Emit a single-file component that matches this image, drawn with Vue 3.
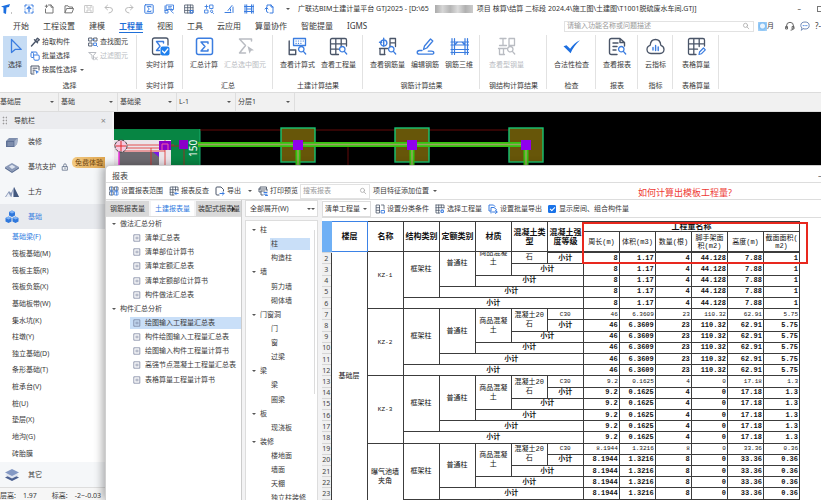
<script setup>
import { ref } from 'vue'

const B = '#3b7de0'
const D = '#4a5568'
const G = '#b9bcc2'
const s = (c, d, w = 1) => `<path d="${d}" fill="none" stroke="${c}" stroke-width="${w}" stroke-linejoin="round" stroke-linecap="round"/>`
const lens = (c) => s(c, 'M16 12.2a2.7 2.7 0 1 1-5.4 0a2.7 2.7 0 1 1 5.4 0M15.4 14.4l2.3 2.6', 1.3)

const large = {
  select: s(B, 'M5.5 2.5v13l3.6-3.1h6.1z', 1.3),
  realtime: s(D, 'M9 17.5H3.5q-2 0-2-2V3q0-2 2-2H15q2 0 2 2v5', 1.3) + s(B, 'M12.5 6V4.5h-7L9 9.2l-3.5 4.3h3', 1.4) + `<rect x="9.5" y="9.5" width="9" height="9" rx="2" fill="#1f80ee"/>` + s('#fff', 'M11.5 14l2 2 3.3-4', 1.2),
  sum: s(B, 'M3.5 1.2h12q2 0 2 2v12.3q0 2-2 2h-12q-2 0-2-2V3.2q0-2 2-2z', 1.5) + s(B, 'M13 6.5V5H6l4 4.5L6 14h7v-1.5', 1.4),
  sumSel: s(G, 'M15.5 4V2H3.5l6 6.5-6 7.5h6', 1.5) + `<path d="M11.5 9l6.5 4.2-3 .6-1.5 3z" fill="${G}"/>`,
  formula: s(B, 'M5.5 1.5h12v7h-12z', 1.3) + s(B, 'M8 4h.2M10.4 4h.2M12.8 4h.2M15.2 4h.2M8 6.3h.2M10.4 6.3h.2M12.8 6.3h.2', 1.2) + s(D, 'M1.2 4v13.5h6.5v-4.5h-6.5', 1.4) + lens(B),
  quantity: s(D, 'M9.5 17.5H3q-1.5 0-1.5-1.5V3Q1.5 1.5 3 1.5h13q1.5 0 1.5 1.5v6M1.5 6.8h16M1.5 12.2h8M6.8 1.5v16M12.2 1.5v8', 1.3) + lens(B),
  rebarQty: s(B, 'M1.5 5.2h2.2M5.7 1.2v8M8.8 5.2a3.1 3.1 0 1 1-6 0a3.1 3.1 0 0 1 6 0', 1.4) + s(D, 'M12 9.5V1.5h5.5v8M12 5.8h5.5M1.5 11.5h8M2 11.5v6h5M6.5 11.5v6', 1.3) + lens(B),
  rebarEdit: s(B, 'M7.5 12.5l1-3.5 6-7 2.3 2-6 7zM6 13.5H3.5q-2.3.2-2.3 2 0 1.7 2.3 1.7h12q2.3 0 2.3-1.5t-2.5-1.5h-3', 1.3),
  rebar3d: s(B, 'M2 1.5v16M4.5 1.5v16M15 1.5v16M17.5 1.5v16M1 5h17.5M1 8h17.5M1 12.5h17.5M1 15.5h17.5M4.5 8l3-3M15 8l-3-3', 1.2),
  steel: s(G, 'M3 1.5h6M6 1.5v7M2.5 8.5h7M12 8.5v-7h5.5v7M12 8.5h5.5M1.5 11.5h8M2.5 11.5v6h5M6.5 11.5v6', 1.3) + lens(G),
  check: `<path d="M1.5 9.2l3-1 3.6 3.6Q12 6 18 3.2 11.5 9 8.6 16.2z" fill="#1d6fe0"/>`,
  report: s(D, 'M9 17.5H3.5q-2 0-2-2V3.5q0-2 2-2H12l4.5 4v3.5M5 6h5M5 9.5h4M5 13h3M12 1.5v4h4.5', 1.4) + lens(B),
  cloud: s(D, 'M5 16.5Q1.2 16.3 1 12.5 1 9.2 4.2 8.3 4.7 2.5 9.5 2.5t5.3 5.8Q18 9.2 18 12.5q-.2 3.8-4 4z', 1.3) + s(B, 'M7 13v-2.5M9.6 13.5v-5M12.2 13.5V10', 1.4),
  tableCalc: s(D, 'M9 17.5H3q-1.5 0-1.5-1.5V3Q1.5 1.5 3 1.5h13q1.5 0 1.5 1.5v6M1.5 6.8h16M1.5 12.2h9M6.8 1.5v16M12.2 1.5v8', 1.3) + s(B, 'M12 17.5l.5-2.5 4-4 1.8 1.8-4 4z', 1.2),
}

const small = {
  pick: s(D, 'M1.5 9l4.5-5M4.5 2.8l3 3M5.5 3.8l2-2.5 1.8 1.5-2.3 2z', 1.4),
  batch: s(B, 'M3.5 3.5v-.8q0-1.2-1-1.2H2Q1 1.5 1 2.5v3q0 1 1 1h1M4 4h4q1.2 0 1.2 1v3q0 1.2-1.2 1.2H5Q3.8 9.2 3.8 8z') + s(B, 'M1.5 1h4.5q1 0 1 1v1'),
  attr: s(D, 'M9 5V1H1v8h3M3 3.2h4M3 5.2h2M3 7h1') + `<path d="M5.2 5l4 2-1.7.5-.8 1.8z" fill="${B}"/>`,
  find: s(D, 'M1 1h3v3H1zM6 1h3v3H6zM1 6h3v3H1z', 0.9) + s(B, 'M6 6h2.5v2.5H6zM8.5 8.5l1 1M5 2.5h1', 0.9),
  filter: s(G, 'M1 1.5h7L5.5 4.5V8.5L4 7.5v-3zM6.5 6l3 3M9.5 6l-3 3'),
  newPick: s(B, 'M1 3V1h2M7 1h2v2M9 7v2H7M3 9H1V7M5 1v.2M1 5v.2M9 5v.2M5 9v.2', 1) + s(B, 'M5 7.8V3M3.2 4.6L5 2.8l1.8 1.8', 1.3),
  file: s('#777', 'M4.5 1H7l2 2.2V9H1.5V5M7 1v2.2h2M2.5 1v2.5M1.2 2.2h2.5'),
  open: s('#777', 'M1 8.5V1.8h3l1 1.2h3.5v1.2M1 8.5l1.6-4h7l-1.5 4z'),
  save: s('#c8c8c8', 'M1 1.5h7L9 2.5v6H1zM3 1.5v2.5h4V1.5M3 8.5V6h4v2.5'),
  undo: s('#bbb', 'M3.5 1.2L1 3.5l2.5 2.3M1 3.5h4.5q3 0 3 2.5T5 9'),
  redo: s('#bbb', 'M6.5 1.2L9 3.5 6.5 5.8M9 3.5H4.5q-3 0-3 2.5T5 9'),
  sumS: s(B, 'M1.5.8h7q.7 0 .7.7v7q0 .7-.7.7h-7q-.7 0-.7-.7v-7q0-.7.7-.7z') + s(B, 'M7 3.2v-.7H3.2L5.2 5l-2 2.5H7v-.7', 0.9),
  calcS: s(B, 'M2.5 1h7v4.5h-7zM1 2v7h3V6.5H1M4.5 2.7h3M4.5 4h2M7.5 7.2a1 1 0 1 1 .1 0M8.2 8l1.2 1.2', 0.9),
  gridS: s(D, 'M1 1h8v8H1zM1 3.7h8M1 6.4h8M3.7 1v8M6.4 1v8', 0.8) + s(B, 'M6.5 6.5h2.5V9H6.5z', 1),
  rebarS: s(B, 'M1 2.5h3M2.5 1v3.5M6 1h3v3.5H6zM1 6h3v3H1zM7.5 8.5a1.2 1.2 0 1 1 .1 0M8.5 8.5l1 1', 0.9),
  editS: s(B, 'M1 8.5h6M4 6.5l4-5M9 3v5.5M6.5 5v2', 1),
  frameS: s(B, 'M1 .8v8.4M2.7.8v8.4M7.5.8v8.4M9.2.8v8.4M.5 2.5h9M.5 7.5h9M2.7 5h5', 1),
  docS: s(B, 'M3 3V1h4l2 2v6H6M7 1v2h2M1 5l1.5-1.5L4 5M2.5 3.8V7q0 1.5 1.5 1.5', 1),
  range: s(D, 'M1 1h3.2v3.2H1zM5.8 1H9v3.2H5.8zM1 5.8h3.2V9H1z', 0.8) + s(B, 'M1 5h8M5.8 5.8H9V9H5.8zM2.5 1v8M7.5 1v8', 0.7),
  back: s(D, 'M5 9H1.2V1H9v4M1.2 3.7H9M1.2 6.3h4M3.8 1v8M6.5 1v4', 0.8) + s(B, 'M9.2 7.5H6M7.2 6.2L6 7.5l1.2 1.3', 0.9),
  exp: s(D, 'M4 9H2Q1 9 1 8V2q0-1 1-1h4l2.5 2.5V5') + s(B, 'M5 7.5h4M7.5 6L9 7.5 7.5 9'),
  print: s(D, 'M2 3V1h6.5v2M1 3h8v2M1 3v3h1.5M3 5v4h2M3 5h4', 0.9) + s(B, 'M6 6.5h3M6 8.2h3M7.5 9.5h2'),
  cond: s(D, 'M1.5 1h3v8h-3zM1.5 3.7h3M1.5 6.3h3M6.5 1h2.5v4', 0.8) + s(B, 'M6.5 6.5h3v2.5h-3z', 0.9),
  gear: s(D, 'M1 1h8v3M1 1v8h3.5M1 3.7h8M1 6.3h3.5M3.7 1v8M6.3 1v3', 0.8) + s(B, 'M8.5 7.2a1.3 1.3 0 1 1-2.6 0a1.3 1.3 0 1 1 2.6 0', 1.1),
  batchOut: s(B, 'M2.5 7H1V1h4.5L7 2.5M3 9V3.5h3l2.5 2V6M4.5 8h4.5M7.5 6.5L9.2 8 7.5 9.5', 1),
  doc: s('#6d7794', 'M1.5 1h7v8h-7zM3.5 4h3M3.5 6h3', 0.9),
  lens: s('#999', 'M7 4.2a2.6 2.6 0 1 1-5.2 0a2.6 2.6 0 1 1 5.2 0M6.3 6.2L8.5 8.5', 0.8),
  lock: s('#63718a', 'M2 4.5h6V9H2zM3.3 4.5V3q0-2 1.7-2t1.7 2v1.5M5 6v1.2', 1),
  headset: s('#666', 'M1.5 6.5V5q0-3.7 3.5-3.7T8.5 5v1.5M1 5.5h1.5v2.5H1zM7.5 5.5H9v2.5H7.5zM8 8q0 1.2-2 1.2'),
  chat: s('#7189b5', 'M1.5 9l.5-2Q.8 6 .8 4.5.8 1 5 1t4.2 3.5T5 8q-1 0-1.7-.3z') + s(B, 'M3.2 4.6h.1M5 4.6h.1M6.8 4.6h.1', 1.2),
}

const navIcons = {
  finish: `<path d="M1 6l3-3h9l-1 6-3 3H1z" fill="#7f8fae"/><path d="M1 6h8.5v6H1z" fill="#5f7196"/><path d="M9.5 6l3.5-3-1 6-2.5 3z" fill="#a9b5cc"/><path d="M2.5 8h6M2.5 10h6" stroke="#c8d1e2" stroke-width=".6"/>`,
  pit: `<path d="M0 7l7-4 7 4-7 4.5z" fill="#8b9ab8"/><path d="M0 7v1.5l7 4.5 7-4.5V7l-7 4.5z" fill="#5e7095"/><path d="M4 6.5l3-1.7L10.5 7 7 9z" fill="#dbe2ee"/>`,
  earth: `<path d="M0 12l4-6 2 2 3-6 5 10z" fill="#8a99b8"/><path d="M9 2l5 10H9z" fill="#44597f"/><path d="M3.5 8L6 12H1z" fill="#e8edf5"/><path d="M8 5v7H6.5z" fill="#f4f6fa"/>`,
  base: `<path d="M7 .5l3 1.5v3.5L7 7 4 5.5V2zM3.5 6.5l3 1.5v3.5l-3 1.5-3-1.5V8zM10.5 6.5l3 1.5v3.5l-3 1.5-3-1.5V8z" fill="#2f78dc"/><path d="M7 .5l3 1.5-3 1.5L4 2zM3.5 6.5l3 1.5-3 1.5-3-1.5zM10.5 6.5l3 1.5-3 1.5-3-1.5z" fill="#7fb2f5"/>`,
  other: `<path d="M0 9.5L7 6l7 3.5L7 13z" fill="#4b6090"/><path d="M0 7l7-3.5L14 7l-7 3.5z" fill="#dfe5f0"/><path d="M0 4.5L7 1l7 3.5L7 8z" fill="#8499c4"/>`,
}

const quick = ['newPick', 'file', 'open', 'save', 'undo', 'redo', 'sumS', 'calcS', 'gridS', 'rebarS', 'editS', 'frameS', 'docS']
const menus = ['开始', '工程设置', '建模', '工程量', '视图', '工具', '云应用', '算量协作', '智能提量', 'IGMS']
const groups = [
  { label: '实时计算', roomy: true, items: [['realtime', '实时计算']] },
  { label: '汇总', items: [['sum', '汇总计算'], ['sumSel', '汇总选中图元', true]] },
  { label: '土建计算结果', items: [['formula', '查看计算式'], ['quantity', '查看工程量']] },
  { label: '钢筋计算结果', items: [['rebarQty', '查看钢筋量'], ['rebarEdit', '编辑钢筋'], ['rebar3d', '钢筋三维']] },
  { label: '钢结构计算结果', roomy: true, items: [['steel', '查看型钢量', true]] },
  { label: '检查', items: [['check', '合法性检查']] },
  { label: '报表', items: [['report', '查看报表']] },
  { label: '指标', items: [['cloud', '云指标']] },
  { label: '表格算量', roomy: true, items: [['tableCalc', '表格算量']] },
]
const scopes = [['楼层', '基础层'], ['类型', '基础'], ['构件类型', '基础梁'], ['构件', 'L-1'], ['分层', '分层1']]
const nav = [['finish', '装修'], ['pit', '基坑支护'], ['earth', '土方'], ['base', '基础']]
const subNav = ['基础梁(F)', '筏板基础(M)', '筏板主筋(R)', '筏板负筋(X)', '基础板带(W)', '集水坑(K)', '柱墩(Y)', '独立基础(D)', '条形基础(T)', '桩承台(V)', '桩(U)', '垫层(X)', '地沟(G)', '砖胎膜']
const footings = [166, 280, 394]

const reports = [
  { t: '做法汇总分析', root: true },
  { t: '清单汇总表' }, { t: '清单部位计算书' }, { t: '清单定额汇总表' }, { t: '清单定额部位计算书' }, { t: '构件做法汇总表' },
  { t: '构件汇总分析', root: true },
  { t: '绘图输入工程量汇总表', on: true }, { t: '构件绘图输入工程量汇总表' }, { t: '绘图输入构件工程量计算书' }, { t: '高强节点混凝土工程量汇总表' }, { t: '表格算量工程量计算书' },
]
const parts = [
  { t: '柱', root: true }, { t: '柱', on: true }, { t: '构造柱' },
  { t: '墙', root: true }, { t: '剪力墙' }, { t: '砌体墙' },
  { t: '门窗洞', root: true }, { t: '门' }, { t: '窗' }, { t: '过梁' },
  { t: '梁', root: true }, { t: '梁' }, { t: '圈梁' },
  { t: '板', root: true }, { t: '现浇板' },
  { t: '装修', root: true }, { t: '楼地面' }, { t: '墙面' }, { t: '天棚' }, { t: '独立柱装修' },
]

const showRooms = ref(true)
const heads = ['楼层', '名称', '结构类别', '定额类别', '材质', '混凝土类\n型', '混凝土强\n度等级']
const measures = ['周长(m)', '体积(m3)', '数量(根)', '脚手架面\n积(m2)', '高度(m)', '截面面积(\nm2)']
const blocks = [
  { name: 'KZ-1', v: ['8', '1.17', '4', '44.128', '7.88', '1'] },
  { name: 'KZ-2', v: ['46', '6.3609', '23', '110.32', '62.91', '5.75'] },
  { name: 'KZ-3', v: ['9.2', '0.1625', '4', '0', '17.18', '1.3'] },
  { name: '曝气池墙\n夹角', v: ['8.1944', '1.3216', '8', '0', '33.36', '0.36'] },
]
// Six rows per component: the detail row followed by nested subtotals.
// The first detail row is scrolled under the header, so its single-line cells stay blank.
const blank = '\u00a0'
const rows = blocks.flatMap((b, i) =>
  Array.from({ length: 6 }, (_, k) => {
    const under = i === 0 && k === 0
    const cells = []
    if (k === 0) {
      if (i === 0) cells.push({ t: '基础层', rs: 24 })
      cells.push(
        { t: b.name, rs: 6, latin: b.name.startsWith('KZ') },
        { t: '框架柱', rs: 5 },
        { t: '普通柱', rs: 4 },
        { t: '商品混凝\n土', rs: 3 },
        { t: under ? blank + '\n石' : '混凝土20\n石', rs: 2 },
        { t: under ? blank : 'C30', latin: true },
      )
    } else {
      cells.push({ t: '小计', cs: k })
    }
    return { n: under ? blank : i * 6 + k + 1, cells, v: under ? b.v.map(() => blank) : b.v, bold: k > 0 }
  }),
)
</script>

<template>
  <div class="app">
    <header class="titlebar">
      <svg class="logo" viewBox="0 0 14 12"><path d="M1 3.5L10 1 9 4 6.500 4.500 6 11 3.500 10V4.600z" fill="#1c6fe0" /><path d="M11 9.500h1v1h-1z" fill="#888" /></svg>
      <div class="quick">
        <button v-for="q in quick" :key="q" :aria-label="q"><svg class="i10" viewBox="0 0 10 10" v-html="small[q]" /></button>
        <i class="caret" />
      </div>
      <h1>
        <span>广联达BIM土建计量平台 GTJ2025 - [D:\65</span><span class="mask" /><span>项目 核算\结算 二标段 2024.4\施工图\土建图\T1001脱硫废水车间.GTJ]</span>
      </h1>
      <div class="winbtns"><button aria-label="最小化">–</button><button aria-label="还原" class="box" /></div>
    </header>

    <nav class="menu">
      <a v-for="m in menus" :key="m" href="#" :class="{ on: m === '工程量' }">{{ m }}</a>
      <label class="search top">
        <input type="text" aria-label="搜索" placeholder="请输入功能名称或问题描述" />
        <svg class="i8" viewBox="0 0 10 10" v-html="small.lens" />
      </label>
      <div class="account">
        <span class="user"><i class="avatar" />月</span>
        <svg class="i10" viewBox="0 0 10 10" v-html="small.headset" />
        <svg class="i10" viewBox="0 0 10 10" v-html="small.chat" />
        <span class="help">?-</span>
      </div>
    </nav>

    <section class="ribbon">
      <div class="group first">
        <div class="tools">
          <button class="big active"><svg class="i19" viewBox="0 0 19 19" v-html="large.select" />选择</button>
          <div class="stack">
            <button><svg class="i10" viewBox="0 0 10 10" v-html="small.pick" />拾取构件</button>
            <button><svg class="i10" viewBox="0 0 10 10" v-html="small.batch" />批量选择</button>
            <button><svg class="i10" viewBox="0 0 10 10" v-html="small.attr" />按属性选择<i class="caret" /></button>
          </div>
          <div class="stack">
            <button><svg class="i10" viewBox="0 0 10 10" v-html="small.find" />查找图元</button>
            <button disabled><svg class="i10" viewBox="0 0 10 10" v-html="small.filter" />过滤图元</button>
          </div>
        </div>
        <div class="glabel">选择</div>
      </div>
      <div v-for="g in groups" :key="g.label" class="group" :class="{ roomy: g.roomy }">
        <div class="tools">
          <button v-for="[ic, t, off] in g.items" :key="t" class="big" :disabled="off">
            <svg class="i19" viewBox="0 0 19 19" v-html="large[ic]" />{{ t }}
          </button>
        </div>
        <div class="glabel">{{ g.label }}</div>
      </div>
    </section>

    <section class="scopes">
      <span v-for="[l, v] in scopes" :key="l" class="pick">
        <select :aria-label="l"><option>{{ v }}</option></select><i class="caret" />
      </span>
    </section>

    <main class="work">
      <aside class="side">
        <div class="sidehead"><span class="grip" />导航栏<button aria-label="关闭">×</button></div>
        <a v-for="[ic, t] in nav" :key="t" href="#" class="cat" :class="{ on: t === '基础' }">
          <svg class="i14" viewBox="0 0 14 14" v-html="navIcons[ic]" />{{ t }}
          <template v-if="ic === 'pit'"><svg class="i8" viewBox="0 0 10 10" v-html="small.lock" /><em>免费体验</em></template>
        </a>
        <ul class="sub">
          <li v-for="(t, i) in subNav" :key="t"><a href="#" :class="{ on: i === 0 }">{{ t }}</a></li>
        </ul>
        <a href="#" class="cat"><svg class="i14" viewBox="0 0 14 14" v-html="navIcons.other" />其它</a>
        <footer class="status"><span>层高:</span><span>1.97</span><span class="lvl">标高:</span><span>-2~-0.03</span></footer>
      </aside>

      <div class="canvas">
        <svg width="707" height="60" viewBox="0 0 707 60">
          <path d="M0 17h86v43H0z" fill="#078543" />
          <path d="M86 17v43" stroke="#18b070" />
          <path d="M0 28h57v32H0z" fill="#ebe4ea" />
          <path d="M5 40h40v20H5z" fill="#6d6a70" />
          <path d="M39 40h6v5z" fill="#7a18e8" />
          <path d="M0 33h60M6 36h45M6 39h45M51 28v32M37 36v24" stroke="#e02828" stroke-width=".8" fill="none" />
          <path d="M5 38v22" stroke="#f030e0" stroke-width="1.5" />
          <circle cx="7" cy="34" r="6" fill="#f6c8e0" stroke="#444" stroke-dasharray="3 1" />
          <path d="M2 34h10M7 29v10" stroke="#e02828" />
          <path d="M45 29h12v9H45z" fill="#8a00c8" />
          <path d="M48 38v-6h6v6" stroke="#f060a0" fill="none" />
          <path d="M57 34h9M70 37v23" stroke="#b02020" stroke-width=".8" />
          <path d="M86 18h340M234 34v26" stroke="#7d0d0d" stroke-width=".8" fill="none" />
          <rect v-for="x in footings" :key="x" :x="x + 1" y="16" width="34" height="34" fill="#675609" stroke="#17c674" stroke-width="1.4" />
          <path d="M84 32.500h328" stroke="#35c50f" stroke-width="5" />
          <path d="M84 32.500h328" stroke="#9aa060" stroke-width="1.6" />
          <g v-for="x in footings" :key="x">
            <path :d="`M${x + 18} 37v23`" stroke="#35c50f" stroke-width="5" />
            <path :d="`M${x + 18} 37v23`" stroke="#9aa060" stroke-width="1.5" />
            <rect :x="x + 13" y="28" width="10" height="10" fill="#8f00ee" />
          </g>
          <rect x="65" y="28" width="9" height="9" fill="#8a00c8" />
          <text transform="translate(83 45) rotate(-90)" fill="#fff" font-size="10">150</text>
        </svg>
      </div>

      <section class="dialog">
        <div class="dtitle"><h2>报表</h2><button aria-label="最小化">–</button></div>
        <div class="dbar">
          <button><svg class="i10" viewBox="0 0 10 10" v-html="small.range" />设置报表范围</button>
          <button><svg class="i10" viewBox="0 0 10 10" v-html="small.back" />报表反查</button>
          <button><svg class="i10" viewBox="0 0 10 10" v-html="small.exp" />导出<i class="caret far" /></button>
          <button><svg class="i10" viewBox="0 0 10 10" v-html="small.print" />打印预览</button>
          <label class="search"><input type="text" aria-label="搜索报表" placeholder="搜索报表" /><svg class="i8" viewBox="0 0 10 10" v-html="small.lens" /></label>
          <button>项目特征添加位置<i class="caret" /></button>
          <strong class="note">如何计算出模板工程量?</strong>
        </div>
        <div class="dbody">
          <div class="left">
            <div class="tabs"><button>钢筋报表量</button><button class="on">土建报表量</button><button>装配式报表量</button><i class="more" /></div>
            <ul class="tree">
              <li v-for="r in reports" :key="r.t" :class="{ root: r.root, on: r.on }">
                <i v-if="r.root" class="caret" /><svg v-else class="i8" viewBox="0 0 10 10" v-html="small.doc" /><span>{{ r.t }}</span>
              </li>
            </ul>
          </div>
          <div class="mid">
            <button class="expand">全部展开(W)<span class="dots"><i class="caret" /><i class="caret" /></span></button>
            <ul class="tree parts">
              <li v-for="(p, i) in parts" :key="i" :class="{ root: p.root, on: p.on }">
                <i v-if="p.root" class="caret" /><span>{{ p.t }}</span>
              </li>
            </ul>
          </div>
          <div class="right">
            <div class="rbar">
              <span class="pick boxed"><select aria-label="工程量类型"><option>清单工程量</option></select><i class="caret" /></span>
              <button><svg class="i10" viewBox="0 0 10 10" v-html="small.cond" />设置分类条件</button>
              <button><svg class="i10" viewBox="0 0 10 10" v-html="small.gear" />选择工程量</button>
              <button><svg class="i10" viewBox="0 0 10 10" v-html="small.batchOut" />设置批量导出</button>
              <label class="tick"><input v-model="showRooms" type="checkbox" />显示房间、组合构件量</label>
            </div>
            <div class="sheet">
              <table class="thead">
                <colgroup><col class="num" /><col v-for="n in 13" :key="n" /></colgroup>
                <thead>
                  <tr>
                    <th class="corner" rowspan="2" />
                    <th v-for="(h, i) in heads" :key="h" rowspan="2" :class="{ cur: i === 0 }">{{ h }}</th>
                    <th colspan="6">工程量名称</th>
                  </tr>
                  <tr class="units"><th v-for="m in measures" :key="m">{{ m }}</th></tr>
                </thead>
              </table>
              <div class="scroll">
                <table>
                  <colgroup><col class="num" /><col v-for="n in 13" :key="n" /></colgroup>
                  <tbody>
                    <tr v-for="(r, k) in rows" :key="k" :class="{ bold: r.bold }">
                      <th class="rownum">{{ r.n }}</th>
                      <td v-for="(c, i) in r.cells" :key="i" :rowspan="c.rs" :colspan="c.cs" :class="{ latin: c.latin }">{{ c.t }}</td>
                      <td v-for="(v, i) in r.v" :key="'v' + i" class="val">{{ v }}</td>
                    </tr>
                  </tbody>
                </table>
              </div>
              <div class="frame" />
            </div>
          </div>
        </div>
      </section>
    </main>
  </div>
</template>

<style>
body { margin: 0; overflow: hidden; }
</style>

<style scoped>
* { box-sizing: border-box; }
.app {
  height: 100vh; display: flex; flex-direction: column; overflow: hidden; background: #fff;
  font: 7px/10px "Noto Sans", "Noto Sans CJK SC", sans-serif; color: #3a3a3a; white-space: nowrap;
}
button, select, input { font: inherit; color: inherit; border: 0; background: none; padding: 0; margin: 0; outline: 0; }
a { color: inherit; text-decoration: none; }
ul { list-style: none; margin: 0; padding: 0; }
h1, h2 { font: inherit; margin: 0; }
svg { display: block; flex: none; }
.i8 { width: 8px; height: 8px; }
.i10 { width: 10px; height: 10px; }
.i14 { width: 14px; height: 14px; }
.i19 { width: 19px; height: 19px; }
.caret { flex: none; width: 0; height: 0; border: 2px solid transparent; border-top-color: #555; border-bottom: 0; }

.titlebar { flex: none; height: 17px; display: flex; align-items: center; }
.logo { width: 14px; height: 12px; }
.quick { display: flex; align-items: center; gap: 10px; padding-left: 10px; width: 284px; }
.quick .caret { margin-left: auto; margin-right: 8px; }
.titlebar h1 { display: flex; align-items: center; color: #333; flex: 1; }
.mask { width: 38px; height: 8px; margin: 0 4px 0 6px; background: linear-gradient(90deg, #aaa, #d6d6d6 20%, #b5b5b5 40%, #dcdcdc 60%, #b0b0b0 80%, #ccc); }
.winbtns { display: flex; align-items: center; gap: 16px; }
.winbtns .box { width: 4px; height: 6px; border: 1px solid #777; border-right: 0; }

.menu { flex: none; height: 16px; display: flex; align-items: center; gap: 14px; padding: 2px 0 0 13px; }
.menu a { font-size: 8px; line-height: 13px; border-bottom: 1px solid transparent; }
.menu a.on { color: #1f6fd8; border-color: #1f6fd8; font-weight: 700; }
.search { display: flex; align-items: center; border: 1px solid #e2e2e2; }
.search input { flex: 1; min-width: 0; height: 10px; padding-left: 2px; }
.search input::placeholder { color: #999; opacity: 1; }
.search.top { margin-left: auto; width: 190px; height: 11px; padding-right: 3px; }
.account { display: flex; align-items: center; gap: 5px; margin-left: -10px; }
.user { display: flex; align-items: center; margin-right: 6px; }
.avatar { width: 9px; height: 9px; background: radial-gradient(circle at 50% 45%, #e8f4ff 2px, #7fbdf3 3px, #b5daf8); }
.help { font-size: 8px; }

.ribbon { flex: none; height: 60px; display: flex; border-bottom: 1px solid #dcdcdc; padding: 2px 0 3px; }
.group { display: flex; flex-direction: column; padding: 1px 6px 0 7px; border-right: 1px solid #e2e2e2; }
.group.roomy { padding-left: 9px; padding-right: 8px; }
.group.first { width: 137px; padding-left: 3px; padding-right: 0; }
.tools { display: flex; gap: 6px; height: 42px; }
.big { display: flex; flex-direction: column; align-items: center; gap: 4px; padding-top: 1px; }
.big.active { width: 24px; background: #c6dcf4; }
.first .tools { gap: 3px; }
.stack { display: flex; flex-direction: column; gap: 4px; padding-top: 1px; }
.stack button { display: flex; align-items: center; gap: 2px; }
.stack .caret { margin-left: 1px; }
.stack + .stack { margin-left: 1px; }
button:disabled { color: #b9bcc2; }
.glabel { text-align: center; margin-top: 5px; line-height: 7px; }

.scopes { flex: none; height: 19px; display: flex; background: #f1f1f1; border-bottom: 1px solid #ddd; }
.pick { position: relative; display: flex; align-items: center; width: 59px; border-right: 1px solid #dedede; padding-right: 4px; }
.pick select { appearance: none; flex: 1; min-width: 0; }
.scopes .pick + .pick { padding-left: 2px; }

.work { flex: 1; min-height: 0; display: flex; position: relative; background: #f4f4f6; }
.side { flex: none; width: 112px; display: flex; flex-direction: column; background: #fff; }
.sidehead { height: 17px; display: flex; align-items: center; background: #ebecef; padding: 0 6px 0 2px; }
.sidehead button { margin-left: auto; font-size: 9px; color: #888; }
.grip { width: 5px; height: 9px; margin-right: 7px; background: radial-gradient(circle, #999 40%, transparent 50%) 0 0 / 3px 3px; }
.cat { flex: none; height: 25px; display: flex; align-items: center; gap: 9px; padding-left: 5px; background: #f5f7f9; position: relative; }
.cat.on { background: #e8eaee; color: #3a80e0; }
.cat .i8 { margin-left: -4px; }
.cat em { position: absolute; right: 7px; top: 3px; padding: 0 2px 0 3px; font-style: normal; line-height: 11px; border-radius: 5px 0 0 5px; background: linear-gradient(90deg, #f2ca83, #dea550); color: #6b430e; }
.sub { flex: 1; min-height: 0; display: flex; flex-direction: column; padding-left: 12px; }
.sub li { flex: 1; min-height: 0; display: flex; align-items: center; }
.sub .on { color: #2f7be0; }
.status { height: 13px; display: flex; align-items: center; gap: 7px; border-top: 1px solid #ddd; background: #f6f6f6; padding-top: 3px; }
.status .lvl { margin-left: 8px; }

.canvas { flex: 1; margin-left: 2px; background: #000; overflow: hidden; }

.dialog { position: absolute; left: 105px; top: 53px; right: 0; bottom: 0; display: flex; flex-direction: column; background: #fff; border: 1px solid #cfcfcf; border-right: 0; border-bottom: 0; border-radius: 5px 0 0 0; box-shadow: -3px 0 8px rgba(0, 0, 0, .3); }
.dtitle { height: 17px; flex: none; display: flex; align-items: center; justify-content: space-between; padding: 4px 0 0 6px; border-bottom: 1px solid #ddd; }
.dtitle h2 { font-size: 8px; }
.dtitle button { width: 3px; overflow: hidden; }
.dbar { height: 17px; flex: none; display: flex; align-items: center; gap: 6px; padding-left: 3px; border-bottom: 1px solid #ddd; position: relative; }
.dbar button, .rbar button { display: flex; align-items: center; gap: 2px; }
.dbar .caret { margin-left: 2px; }
.dbar .far { margin-left: 5px; }
.dbar .search { width: 70px; height: 15px; margin: 0 -3px 0 -4px; padding-right: 2px; }
.note { position: absolute; left: 532px; top: 4px; font-size: 9px; line-height: 12px; font-weight: 400; color: #ee3a34; }
.dbody { flex: 1; min-height: 0; display: flex; background: #f3f3f4; }
.left { width: 136px; display: flex; flex-direction: column; border-right: 1px solid #ccc; overflow: hidden; }
.tabs { flex: none; height: 17px; display: flex; gap: 2px; padding-top: 1px; position: relative; border-bottom: 1px solid #ddd; }
.tabs button { flex: none; width: 43px; background: #d9d9d9; }
.tabs button:nth-child(3) { width: 46px; text-align: left; padding-left: 2px; }
.tabs .on { background: #fff; color: #2f7be0; }
.more { position: absolute; right: 6px; top: 6px; border: 3px solid transparent; border-left-color: #333; border-right: 0; }
.tree { flex: 1; min-height: 0; display: grid; grid-auto-rows: 5%; background: #fff; }
.tree li { display: flex; align-items: center; gap: 4px; margin-left: 24px; padding-left: 3px; }
.tree li.root { margin-left: 3px; }
.tree .on { background: #c9dff8; margin-top: 1px; margin-bottom: 1px; }
.mid { width: 73px; margin: 0 4px 0 3px; display: flex; flex-direction: column; gap: 3px; }
.expand { flex: none; height: 17px; display: flex; justify-content: space-between; align-items: center; padding: 0 2px 0 4px; background: #fff; border: 1px solid #ddd; }
.dots { display: flex; }
.parts { grid-auto-rows: 5.1%; padding-top: 2px; border: 1px solid #ddd; border-bottom: 0; overflow: hidden; background: linear-gradient(#dcdcdc, #dcdcdc) 68px 9px / 1px 164px no-repeat #fff; }
.parts li { margin: 0 7px 0 24px; padding-left: 1px; }
.parts li.root { margin-left: 3px; padding-left: 3px; }
.right { flex: 1; min-width: 0; display: flex; flex-direction: column; background: #fff; }
.rbar { flex: none; height: 18px; display: flex; align-items: center; gap: 6px; border-bottom: 1px solid #ddd; }
.boxed { width: 49px; height: 16px; border: 1px solid #ddd; padding-left: 2px; padding-right: 3px; margin-right: -2px; }
.tick { display: flex; align-items: center; gap: 3px; }
.tick input { appearance: none; width: 8px; height: 8px; border-radius: 1px; background: #fff; border: 1px solid #1a73e8; display: grid; place-items: center; }
.tick input:checked { background: #1a73e8; }
.tick input:checked::after { content: ""; width: 2px; height: 4px; border: solid #fff; border-width: 0 1px 1px 0; transform: rotate(45deg); margin-top: -1px; }

.sheet { flex: 1; min-height: 0; display: flex; flex-direction: column; position: relative; margin-top: 3px; }
table { width: calc(100% - 21px); table-layout: fixed; border-collapse: collapse; color: #111; }
.num { width: 9px; }
th, td { padding: 0; border: 1px solid #3c3c3c; text-align: center; vertical-align: middle; font: 7px/9px "Liberation Mono", "Noto Sans CJK SC", monospace; white-space: pre; }
.thead { flex: none; height: 31px; position: relative; background: #fff; }
.thead th { font-size: 8px; font-weight: 700; line-height: 9px; }
.thead tr:first-child { height: 10px; }
.thead .units th { font-size: 7px; font-weight: 400; line-height: 8px; }
.thead .corner { background: #6fb0f5; border-color: #6fb0f5; }
.thead .cur { border-color: #3b82e6; }
.scroll { flex: 1; min-height: 0; overflow: hidden; }
.scroll table { height: calc(100% + 22px); margin-top: -11px; }
.bold td { font-weight: 700; }
td.latin { font-size: 6px; }
td.val { text-align: right; padding-right: 1px; }
tr:not(.bold) td.val { font-size: 6px; }
th.rownum { font: 7px/9px "Noto Sans", sans-serif; color: #444; background: #f0f0f0; border-color: #d5d5d5; border-left: 0; }
.frame { position: absolute; left: calc(9px + (100% - 30px) * 7 / 13 - 2px); top: 1px; right: 13px; height: 42px; border: 2px solid #e8281e; }
</style>
